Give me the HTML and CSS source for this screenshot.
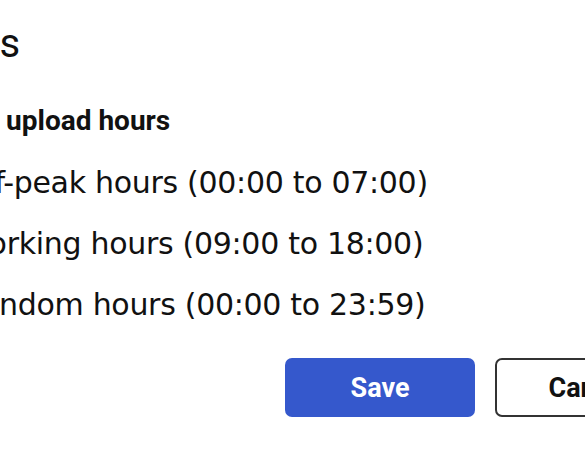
FILE: index.html
```html
<!DOCTYPE html>
<html lang="en">
  <head>
    <meta charset="UTF-8" />
    <meta name="viewport" content="width=device-width, initial-scale=1.0" />
    <title>Upload Settings</title>
    <link rel="stylesheet" href="styles.css">
  </head>
  <body>
    <div class="dialog">
      <h1 class="dialog-title">Settings</h1>

      <h2 class="section-title">Preferred upload hours</h2>

      <div class="options">
        <label class="option">
          <input type="radio" name="hours" value="offpeak" checked>
          <span>Off-peak hours (00:00 to 07:00)</span>
        </label>
        <label class="option">
          <input type="radio" name="hours" value="working">
          <span>Working hours (09:00 to 18:00)</span>
        </label>
        <label class="option">
          <input type="radio" name="hours" value="random">
          <span>Random hours (00:00 to 23:59)</span>
        </label>
      </div>

      <div class="actions">
        <button class="button primary">Save</button>
        <button class="button secondary">Cancel</button>
      </div>
    </div>
  </body>
</html>
```

FILE: styles.css
```css
body {
  margin: 0;
  overflow: hidden;
  background-color: #fff;
  color: #111;
}
.dialog {
  width: 805px;
  margin-left: -120px;
  padding-top: 20px;
}
.dialog-title {
  margin: 0 0 0 -6px;
  font-family: Roboto, Arial, sans-serif;
  font-size: 40px;
  font-weight: 400;
  line-height: 48px;
}
.section-title {
  margin: 37px 0 0;
  font-family: Roboto, Arial, sans-serif;
  font-size: 28px;
  font-weight: 700;
  line-height: 32px;
}
.options {
  display: flex;
  flex-direction: column;
  gap: 25px;
  margin-top: 28px;
  padding-left: 27px;
}
.option {
  display: flex;
  align-items: center;
  gap: 26px;
  font-family: "DejaVu Sans", Verdana, sans-serif;
  font-size: 30px;
  line-height: 36px;
  letter-spacing: -0.3px;
  cursor: pointer;
}
.option input {
  width: 28px;
  height: 28px;
  margin: 0;
}
.actions {
  display: flex;
  justify-content: flex-end;
  gap: 20px;
  margin-top: 35px;
}
.button {
  width: 190px;
  height: 59px;
  border-radius: 7px;
  font-family: Roboto, Arial, sans-serif;
  font-size: 27px;
  font-weight: 700;
  cursor: pointer;
}
.button.primary {
  background-color: #3558cc;
  color: #fff;
  border: none;
}
.button.secondary {
  background-color: #fff;
  color: #111;
  border: 2px solid #333;
}
```
